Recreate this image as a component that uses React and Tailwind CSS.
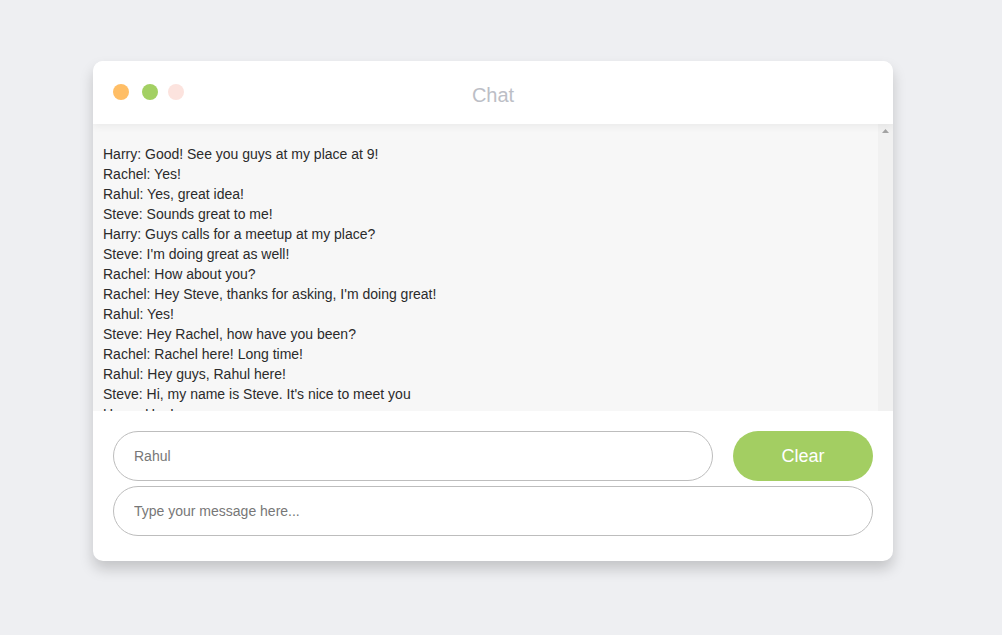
import React from "react";

const messages = [
  "Harry: Good! See you guys at my place at 9!",
  "Rachel: Yes!",
  "Rahul: Yes, great idea!",
  "Steve: Sounds great to me!",
  "Harry: Guys calls for a meetup at my place?",
  "Steve: I'm doing great as well!",
  "Rachel: How about you?",
  "Rachel: Hey Steve, thanks for asking, I'm doing great!",
  "Rahul: Yes!",
  "Steve: Hey Rachel, how have you been?",
  "Rachel: Rachel here! Long time!",
  "Rahul: Hey guys, Rahul here!",
  "Steve: Hi, my name is Steve. It's nice to meet you",
  "Harry: Hey!",
  "Harry: Hello everyone!",
];

export default function App() {
  return (
    <div
      className="w-[1002px] h-[635px] bg-[#eeeff2] pt-[61px] pl-[93px]"
      style={{ fontFamily: '"Liberation Sans", Arial, sans-serif' }}
    >
      <div className="w-[800px] h-[500px] bg-white rounded-[10px] shadow-[0_8px_14px_rgba(0,0,0,0.18)] flex flex-col overflow-hidden">
        <div className="relative z-10 h-[63px] shrink-0 bg-white flex items-center shadow-[0_2px_8px_rgba(0,0,0,0.06)]">
          <div className="absolute left-[20px] top-[23px] flex items-center">
            <span className="w-4 h-4 rounded-full bg-[#ffbe66]" />
            <span className="w-4 h-4 rounded-full bg-[#a3d063] ml-[13px]" />
            <span className="w-4 h-4 rounded-full bg-[#fce3de] ml-[10px]" />
          </div>
          <div className="flex-1 text-center text-[20px] text-[#bcbec6] pt-[4px]">Chat</div>
        </div>
        <div className="h-[287px] shrink-0 bg-[#f7f7f7] flex">
          <div className="flex-1 overflow-hidden pt-[20px] pl-[10px] text-[14px] leading-[20px] text-[#2b2b2b]">
            {messages.map((m, i) => (
              <div key={i} className="whitespace-nowrap">{m}</div>
            ))}
          </div>
          <div className="w-[15px] shrink-0 bg-[#f1f1f1] flex justify-center pt-[5px]">
            <svg width="7" height="4" viewBox="0 0 7 4">
              <polygon points="3.5,0 7,4 0,4" fill="#a3a3a3" />
            </svg>
          </div>
        </div>
        <div className="flex-1 px-[20px] pt-[20px] flex flex-col gap-[5px]">
          <div className="flex gap-[20px]">
            <input
              defaultValue=""
              placeholder="Rahul"
              className="w-[600px] h-[50px] rounded-full border border-[#bdbdbd] px-[20px] text-[14px] text-[#333] placeholder:text-[#777] outline-none"
              style={{ fontFamily: '"Liberation Sans", Arial, sans-serif' }}
            />
            <button
              className="w-[140px] h-[50px] rounded-full bg-[#a3ce62] text-white text-[18px] pt-[1px]"
              style={{ fontFamily: '"Liberation Sans", Arial, sans-serif' }}
            >
              Clear
            </button>
          </div>
          <input
            placeholder="Type your message here..."
            className="w-[760px] h-[50px] rounded-full border border-[#bdbdbd] px-[20px] text-[14px] text-[#333] placeholder:text-[#777] outline-none"
            style={{ fontFamily: '"Liberation Sans", Arial, sans-serif' }}
          />
        </div>
      </div>
    </div>
  );
}
